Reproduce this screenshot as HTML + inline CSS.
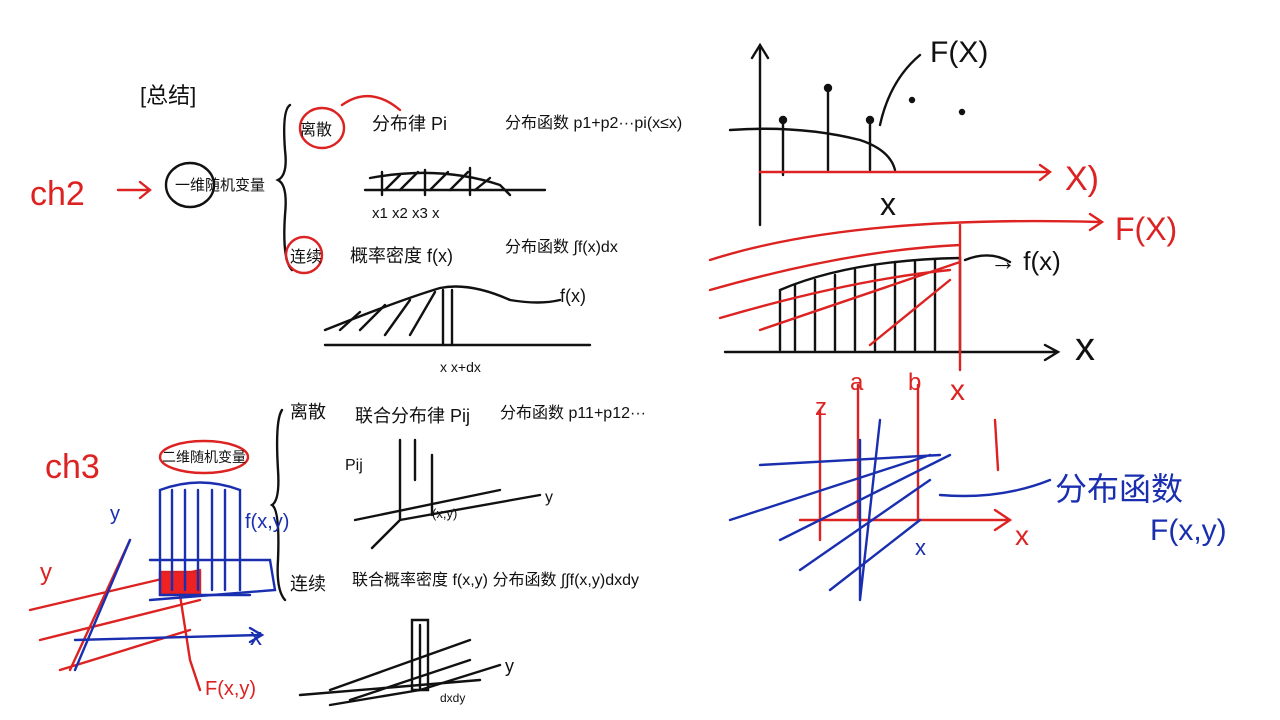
<!DOCTYPE html>
<html><head><meta charset="utf-8"><style>
html,body{margin:0;padding:0;background:#fff;width:1280px;height:720px;overflow:hidden}
svg{display:block}
text{font-family:"Liberation Sans","Noto Sans CJK SC",sans-serif}
</style></head><body>
<svg width="1280" height="720" viewBox="0 0 1280 720" xmlns="http://www.w3.org/2000/svg">
<g fill="none" stroke="#111" stroke-width="2.4" stroke-linecap="round">
<path d="M290 105 Q282 110 285 150 Q288 175 278 180 Q288 185 285 215 Q282 260 292 270"/>
<ellipse cx="190" cy="185" rx="24" ry="22"/>
<path d="M365 190 L545 190"/>
<path d="M370 178 Q440 165 500 185 L510 195"/>
<path d="M382 172 L382 195 M425 170 L425 195 M470 168 L470 195"/>
<path d="M385 190 L400 175 M400 190 L418 172 M430 190 L448 172 M450 190 L468 172 M475 190 L490 178"/>
<path d="M325 345 L590 345"/>
<path d="M325 330 Q400 300 440 288 Q470 282 510 300 Q540 305 560 300"/>
<path d="M340 330 L360 312 M360 330 L385 305 M385 335 L410 300 M410 335 L435 292 M443 290 L443 345 M452 290 L452 345"/>
<path d="M282 410 Q275 420 278 470 Q280 500 272 505 Q280 510 278 560 Q276 590 285 600"/>
<path d="M400 440 L400 520 L540 495 M400 520 L372 548"/>
<path d="M432 455 L432 515 M415 440 L415 480"/>
<path d="M355 520 L500 490"/>
<path d="M420 625 L420 690 L500 665 M420 690 L330 705"/>
<path d="M412 620 L412 690 L428 690 L428 620 Z"/>
<path d="M330 690 L470 640 M350 700 L470 660 M300 695 L480 680"/>
<path d="M760 45 L760 225 M752 58 L760 45 L768 58"/>
<path d="M730 130 Q800 125 860 140 Q890 150 895 170"/>
<path d="M783 120 L783 175 M828 90 L828 170 M870 120 L870 170"/>
<circle cx="783" cy="120" r="3" fill="#111"/><circle cx="828" cy="88" r="3" fill="#111"/><circle cx="870" cy="120" r="3" fill="#111"/>
<circle cx="912" cy="100" r="2" fill="#111"/><circle cx="962" cy="112" r="2" fill="#111"/>
<path d="M880 125 Q890 80 920 55"/>
<path d="M725 352 L1055 352 M1045 345 L1058 352 L1045 360"/>
<path d="M780 350 L780 290 Q850 260 960 258 L960 350"/>
<path d="M795 350 L795 285 M815 350 L815 280 M835 350 L835 275 M855 350 L855 270 M875 350 L875 265 M895 350 L895 262 M915 350 L915 262 M935 350 L935 260"/>
<path d="M965 260 Q990 250 1010 262"/>
</g>
<g fill="none" stroke="#d22" stroke-width="2.4" stroke-linecap="round">
<path d="M118 190 L150 190 M140 182 L150 190 L140 198"/>
<ellipse cx="322" cy="128" rx="22" ry="20"/>
<path d="M342 105 Q370 85 400 110"/>
<ellipse cx="304" cy="255" rx="18" ry="18"/>
<ellipse cx="204" cy="457" rx="44" ry="16"/>
<path d="M760 172 L1050 172 M1040 165 L1050 172 L1040 180"/>
<path d="M710 260 Q850 215 1100 222 M1090 214 L1102 222 L1090 230"/>
<path d="M710 290 Q850 250 960 245 M720 318 Q850 280 950 270 M760 330 L960 262 M870 345 L950 280"/>
<path d="M960 225 L960 370"/>
<path d="M858 385 L858 520 M918 385 L918 520 M820 410 L820 540"/>
<path d="M800 520 L1010 520 M995 510 L1010 520 L995 530"/>
<path d="M995 420 L998 470"/>
<path d="M30 610 L200 570 M40 640 L200 600 M60 670 L190 630 M130 540 L70 670"/>
<rect x="160" y="572" width="40" height="22" fill="#e22"/>
<path d="M180 595 L190 660 L200 690"/>
</g>
<g fill="none" stroke="#1a2fb0" stroke-width="2.4" stroke-linecap="round">
<path d="M160 490 L160 595 L250 595 M160 490 Q200 475 240 490 L240 590"/>
<path d="M172 490 L172 590 M185 490 L185 590 M198 490 L198 590 M212 490 L212 590 M225 490 L225 590"/>
<path d="M150 560 L270 560 L275 590 L150 600"/>
<path d="M75 640 L260 635 M250 628 L262 635 L250 642"/>
<path d="M130 540 L75 670"/>
<path d="M760 465 L940 455 M730 520 L930 455 M780 540 L950 455 M800 570 L930 480 M830 590 L920 520"/>
<path d="M940 495 Q1000 500 1050 480"/>
<path d="M860 440 L860 600 M880 420 L860 600"/>
</g>
<g font-size="22" fill="#111">
<text x="140" y="103">[总结]</text>
<text x="300" y="135" font-size="16">离散</text>
<text x="290" y="262" font-size="16">连续</text>
<text x="372" y="130" font-size="18">分布律 Pi</text>
<text x="505" y="128" font-size="16">分布函数 p1+p2···pi(x≤x)</text>
<text x="372" y="218" font-size="15">x1  x2  x3 x</text>
<text x="350" y="262" font-size="18">概率密度 f(x)</text>
<text x="505" y="252" font-size="16">分布函数 ∫f(x)dx</text>
<text x="560" y="302" font-size="18">f(x)</text>
<text x="440" y="372" font-size="14">x  x+dx</text>
<text x="290" y="418" font-size="18">离散</text>
<text x="355" y="422" font-size="18">联合分布律 Pij</text>
<text x="500" y="418" font-size="16">分布函数 p11+p12···</text>
<text x="345" y="470" font-size="16">Pij</text>
<text x="545" y="502" font-size="16">y</text>
<text x="432" y="518" font-size="13">(x,y)</text>
<text x="290" y="590" font-size="18">连续</text>
<text x="352" y="585" font-size="16">联合概率密度 f(x,y) 分布函数 ∫∫f(x,y)dxdy</text>
<text x="505" y="672" font-size="18">y</text>
<text x="440" y="702" font-size="12">dxdy</text>
<text x="175" y="190" font-size="15">一维随机变量</text>
<text x="162" y="462" font-size="14">二维随机变量</text>
<text x="930" y="62" font-size="30">F(X)</text>
<text x="880" y="215" font-size="32">x</text>
<text x="990" y="270" font-size="26">→ f(x)</text>
<text x="1075" y="360" font-size="40">x</text>
</g>
<g fill="#d22">
<text x="30" y="205" font-size="34">ch2</text>
<text x="45" y="478" font-size="34">ch3</text>
<text x="1065" y="190" font-size="34">X)</text>
<text x="1115" y="240" font-size="32">F(X)</text>
<text x="850" y="390" font-size="24">a</text>
<text x="908" y="390" font-size="24">b</text>
<text x="950" y="400" font-size="30">x</text>
<text x="815" y="415" font-size="24">z</text>
<text x="1015" y="545" font-size="28">x</text>
<text x="40" y="580" font-size="24">y</text>
<text x="205" y="695" font-size="20">F(x,y)</text>
</g>
<g fill="#1a2fb0">
<text x="245" y="528" font-size="20">f(x,y)</text>
<text x="250" y="645" font-size="24">x</text>
<text x="1055" y="500" font-size="32">分布函数</text>
<text x="1150" y="540" font-size="30">F(x,y)</text>
<text x="915" y="555" font-size="22">x</text>
<text x="110" y="520" font-size="20">y</text>
</g>
</svg>
</body></html>
